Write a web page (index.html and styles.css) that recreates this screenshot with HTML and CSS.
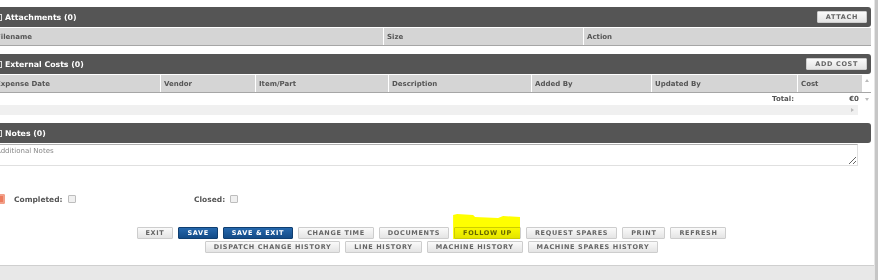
FILE: index.html
```html
<!DOCTYPE html>
<html lang="en">
<head>
    <meta charset="UTF-8">
    <meta name="viewport" content="width=device-width, initial-scale=1.0">
    <title>Job Details</title>
    <link rel="stylesheet" href="styles.css">
</head>
<body>
    <div class="page">
        <div class="main">
            <div class="panel">
                <section class="block">
                    <div class="bar">
                        <span class="toggle"></span>
                        <h2>Attachments (0)</h2>
                        <button type="button" class="btn btn-small">Attach</button>
                    </div>
                    <div class="grid grid-att head-row">
                        <span>Filename</span>
                        <span>Size</span>
                        <span>Action</span>
                    </div>
                </section>

                <section class="block">
                    <div class="bar">
                        <span class="toggle"></span>
                        <h2>External Costs (0)</h2>
                        <button type="button" class="btn btn-small">Add Cost</button>
                    </div>
                    <div class="grid grid-cost head-row">
                        <span>Expense Date</span>
                        <span>Vendor</span>
                        <span>Item/Part</span>
                        <span>Description</span>
                        <span>Added By</span>
                        <span>Updated By</span>
                        <span>Cost</span>
                        <span class="vscroll"><i class="arrow up"></i></span>
                    </div>
                    <div class="grid grid-cost data-row">
                        <span></span>
                        <span></span>
                        <span></span>
                        <span></span>
                        <span></span>
                        <span class="total">Total:</span>
                        <span class="total">€0</span>
                        <span class="vscroll"><i class="arrow down"></i></span>
                    </div>
                    <div class="hscroll">
                        <div class="hscroll-track"><i class="arrow right"></i></div>
                        <div class="hscroll-corner"></div>
                    </div>
                </section>

                <section class="block">
                    <div class="bar">
                        <span class="toggle"></span>
                        <h2>Notes (0)</h2>
                    </div>
                    <textarea class="notes" placeholder="Additional Notes"></textarea>
                </section>

                <div class="check-row">
                    <span class="status-icon"></span>
                    <label class="field">Completed: <input type="checkbox"></label>
                    <label class="field">Closed: <input type="checkbox"></label>
                </div>

                <div class="actions">
                    <div class="action-row">
                        <button type="button" class="btn">Exit</button>
                        <button type="button" class="btn btn-blue">Save</button>
                        <button type="button" class="btn btn-blue">Save &amp; Exit</button>
                        <button type="button" class="btn">Change Time</button>
                        <button type="button" class="btn">Documents</button>
                        <span class="marked">
                            <button type="button" class="btn">Follow Up</button>
                            <span class="highlight"></span>
                        </span>
                        <button type="button" class="btn">Request Spares</button>
                        <button type="button" class="btn">Print</button>
                        <button type="button" class="btn">Refresh</button>
                    </div>
                    <div class="action-row">
                        <button type="button" class="btn">Dispatch Change History</button>
                        <button type="button" class="btn">Line History</button>
                        <button type="button" class="btn">Machine History</button>
                        <button type="button" class="btn">Machine Spares History</button>
                    </div>
                </div>
            </div>
        </div>
        <div class="vline"></div>
        <div class="edge"></div>
    </div>
</body>
</html>
```

FILE: styles.css
```css
body {
    margin: 0;
    font-family: "DejaVu Sans", Verdana, sans-serif;
    background-color: white;
    overflow: hidden;
}
.page {
    display: flex;
    height: 280px;
}
.main {
    width: 882px;
    margin-left: -8px;
    background-color: #e8e8e8;
}
.panel {
    background-color: white;
    padding: 7px 3px 12px 0;
    border-bottom: 1px solid #cfcfcf;
}
.vline {
    width: 3px;
    background-color: #c6c6c6;
    border-left: 1px solid #e6e6e6;
}
.edge {
    flex: 1;
    background-color: white;
}

/* Section header bars */
.block {
    margin-bottom: 8px;
}
.bar {
    display: flex;
    align-items: center;
    height: 20px;
    background-color: #555;
    border-radius: 3px;
    padding: 0 4px 0 3px;
    margin-bottom: 1px;
}
.toggle {
    width: 5px;
    height: 5px;
    border: 1px solid #ddd;
    margin-right: 3px;
}
.bar h2 {
    flex: 1;
    margin: 0;
    color: white;
    font-size: 7.8px;
    font-weight: bold;
}

/* Buttons */
.btn {
    height: 12px;
    padding: 0 8px;
    border: 1px solid #cdcdcd;
    border-radius: 1px;
    background: linear-gradient(#fafafa, #e4e4e4);
    color: #666;
    font-family: inherit;
    font-size: 6.5px;
    font-weight: bold;
    letter-spacing: 0.65px;
    text-transform: uppercase;
    line-height: 10px;
    cursor: pointer;
}
.btn-small {
    padding: 0 8px;
}
.btn-blue {
    background: linear-gradient(#2668ad, #134b87);
    border-color: #0f3e70;
    color: white;
}

/* Grid tables */
.grid {
    display: grid;
    font-size: 7px;
    font-weight: bold;
    color: #555;
}
.grid-att {
    grid-template-columns: 391px 200px 1fr;
}
.grid-cost {
    grid-template-columns: 168px 95px 133px 143px 120px 146px 65px 1fr;
}
.head-row {
    height: 17px;
    border-bottom: 1px solid #a6a6a6;
}
.head-row span {
    display: flex;
    align-items: center;
    padding-left: 3px;
    background-color: #d5d5d5;
    border-left: 1px solid white;
}
.head-row span:first-child {
    border-left: none;
    padding-left: 4px;
}
.head-row .vscroll {
    background-color: white;
    border-left: none;
    align-items: flex-start;
    justify-content: center;
    padding: 4px 0 0;
}
.data-row {
    height: 12px;
}
.data-row span {
    display: flex;
    align-items: center;
    justify-content: flex-end;
    padding-right: 3px;
}
.data-row .vscroll {
    justify-content: center;
    padding: 0;
}
.hscroll {
    display: flex;
    height: 10px;
}
.hscroll-track {
    display: flex;
    align-items: center;
    justify-content: flex-end;
    width: 866px;
    padding-right: 4px;
    box-sizing: border-box;
    background-color: #f0f0f0;
}
.hscroll-corner {
    flex: 1;
}
.arrow {
    width: 0;
    height: 0;
    border: 2px solid transparent;
}
.arrow.up {
    border-bottom: 3px solid #bbb;
    border-top: none;
}
.arrow.down {
    border-top: 3px solid #bbb;
    border-bottom: none;
}
.arrow.right {
    border-left: 3px solid #bbb;
    border-right: none;
}

/* Notes */
.notes {
    display: block;
    width: 866px;
    height: 22px;
    box-sizing: border-box;
    margin: 0;
    padding: 2px 3px;
    border: 1px solid #e0e0e0;
    border-top-color: #b0b0b0;
    font-family: inherit;
    font-size: 7px;
    color: #555;
    resize: both;
}
.notes::placeholder {
    color: #888;
}

/* Completed / Closed */
.check-row {
    display: flex;
    align-items: center;
    height: 10px;
    margin-top: 28px;
}
.status-icon {
    width: 10px;
    height: 10px;
    margin: 0 9px 0 3px;
    border-radius: 2px;
    background-color: #ec7b5d;
    box-shadow: inset 0 0 0 2px #f2a08a;
}
.field {
    display: flex;
    align-items: center;
    gap: 5px;
    width: 180px;
    font-size: 7.5px;
    font-weight: bold;
    color: #555;
}
.field input {
    appearance: none;
    width: 8px;
    height: 8px;
    margin: 0;
    border: 1px solid #bdbdbd;
    border-radius: 1px;
    background-color: #f0f0f0;
}

/* Bottom actions */
.actions {
    display: flex;
    flex-direction: column;
    gap: 2px;
    margin-top: 23px;
}
.action-row {
    display: flex;
    justify-content: center;
    gap: 5px;
}
.marked {
    position: relative;
    display: flex;
}
.highlight {
    position: absolute;
    left: -1px;
    top: -13px;
    width: 67px;
    height: 25px;
    background-color: #ffff00;
    mix-blend-mode: multiply;
    clip-path: polygon(0 1px, 4px 0, 20px 1px, 22px 3px, 45px 4px, 50px 2px, 67px 3px, 67px 25px, 0 25px);
}
```
